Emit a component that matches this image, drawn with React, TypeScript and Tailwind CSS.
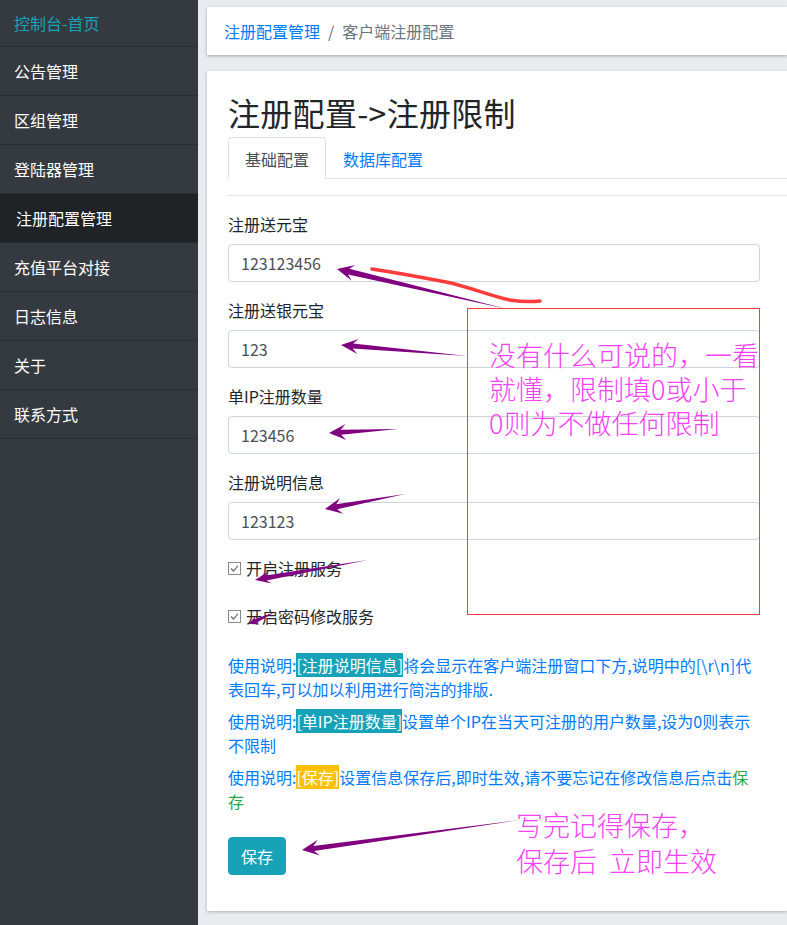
import React from 'react';

const menu = ['公告管理', '区组管理', '登陆器管理', '注册配置管理', '充值平台对接', '日志信息', '关于', '联系方式'];

const fields = [
  { label: '注册送元宝', value: '123123456' },
  { label: '注册送银元宝', value: '123' },
  { label: '单IP注册数量', value: '123456' },
  { label: '注册说明信息', value: '123123' },
];

// annotation arrows: tail -> tip
const arrows = [
  { x1: 507, y1: 309, x2: 337, y2: 269, head: 17, headW: 16, shaft: 6 },
  { x1: 467, y1: 356, x2: 341, y2: 345, head: 17, headW: 15, shaft: 5 },
  { x1: 398, y1: 429, x2: 329, y2: 433, head: 17, headW: 16, shaft: 5 },
  { x1: 405, y1: 494, x2: 325, y2: 509, head: 17, headW: 16, shaft: 5 },
  { x1: 368, y1: 560, x2: 255, y2: 580, head: 16, headW: 13, shaft: 5 },
  { x1: 275, y1: 612, x2: 249, y2: 624, head: 10, headW: 10, shaft: 4 },
  { x1: 520, y1: 820, x2: 302, y2: 850, head: 17, headW: 16, shaft: 5 },
];

function arrowPoints(a: (typeof arrows)[number]) {
  const dx = a.x2 - a.x1;
  const dy = a.y2 - a.y1;
  const len = Math.hypot(dx, dy);
  const ux = dx / len;
  const uy = dy / len;
  const nx = -uy;
  const ny = ux;
  const bx = a.x2 - ux * a.head;
  const by = a.y2 - uy * a.head;
  const jx = a.x2 - ux * a.head * 0.7;
  const jy = a.y2 - uy * a.head * 0.7;
  const pts = [
    [a.x1, a.y1],
    [jx + (nx * a.shaft) / 2, jy + (ny * a.shaft) / 2],
    [bx + (nx * a.headW) / 2, by + (ny * a.headW) / 2],
    [a.x2, a.y2],
    [bx - (nx * a.headW) / 2, by - (ny * a.headW) / 2],
    [jx - (nx * a.shaft) / 2, jy - (ny * a.shaft) / 2],
  ];
  return pts.map((p) => p[0].toFixed(1) + ',' + p[1].toFixed(1)).join(' ');
}

function CheckBox() {
  return (
    <svg width="13" height="13" viewBox="0 0 13 13" className="shrink-0">
      <rect x="0.5" y="0.5" width="12" height="12" fill="#fff" stroke="#8a8a8a" />
      <polyline points="3,6.5 5.5,9 10,3.8" fill="none" stroke="#707070" strokeWidth="1.2" />
    </svg>
  );
}

export default function App() {
  return (
    <div className="relative flex min-h-[925px] w-full overflow-hidden bg-[#e9ecef] font-['Noto_Sans_CJK_SC',sans-serif] text-[16px]">
      {/* sidebar */}
      <aside className="w-[198px] shrink-0 bg-[#343a40] text-white">
        <div className="flex h-[47px] items-center border-b border-[#2a2f34] pl-[14px] text-[#17a2b8]">控制台-首页</div>
        {menu.map((m) => (
          <div
            key={m}
            className={
              m === '注册配置管理'
                ? 'flex h-[49px] items-center border-b border-[#2a2f34] bg-[#1f2326] pl-[16px]'
                : 'flex h-[49px] items-center border-b border-[#2a2f34] pl-[14px]'
            }
          >
            {m}
          </div>
        ))}
      </aside>

      {/* main */}
      <main className="min-w-0 flex-1 pl-[9px] pt-[7px]">
        <div className="flex h-[48px] items-center bg-white px-[17px] shadow-[0_1px_3px_rgba(0,0,0,0.3)]">
          <span className="text-[#007bff]">注册配置管理</span>
          <span className="px-2 text-[#6c757d]">/</span>
          <span className="text-[#6c757d]">客户端注册配置</span>
        </div>

        <div className="mt-4 bg-white pb-[36px] pl-[21px] pt-[22px] shadow-[0_1px_3px_rgba(0,0,0,0.25)]">
          <h2 className="mb-[6px] text-[32px] leading-[38px] tracking-[0.3px] text-[#212529]">注册配置-&gt;注册限制</h2>

          <div className="flex border-b border-[#dee2e6]">
            <div className="-mb-px rounded-t border border-[#dee2e6] border-b-white bg-white px-4 pb-[7px] pt-[9px] leading-[24px] text-[#495057]">
              基础配置
            </div>
            <div className="-mb-px border border-transparent px-4 pb-[7px] pt-[9px] leading-[24px] text-[#007bff]">数据库配置</div>
          </div>

          <div className="mt-4 border-t border-[#e5e5e5]" />

          <div className="mt-4 w-[532px]">
            {fields.map((f) => (
              <div key={f.label} className="mb-4">
                <div className="mb-2 leading-[24px] text-[#212529]">{f.label}</div>
                <div className="flex h-[38px] items-center rounded border border-[#ced4da] px-3 text-[#495057]">{f.value}</div>
              </div>
            ))}

            <div className="mb-6 flex items-center gap-[5px] leading-[24px] text-[#212529]">
              <CheckBox />
              <span>开启注册服务</span>
            </div>
            <div className="mb-[25px] flex items-center gap-[5px] leading-[24px] text-[#212529]">
              <CheckBox />
              <span>开启密码修改服务</span>
            </div>

            <p className="mb-2 leading-[24px] text-[#007bff]">
              使用说明:<span className="bg-[#17a2b8] text-white">[注册说明信息]</span>将会显示在客户端注册窗口下方,说明中的[\r\n]代
              <br />
              表回车,可以加以利用进行简洁的排版.
            </p>
            <p className="mb-2 leading-[24px] text-[#007bff]">
              使用说明:<span className="bg-[#17a2b8] text-white">[单IP注册数量]</span>设置单个IP在当天可注册的用户数量,设为0则表示
              <br />
              不限制
            </p>
            <p className="mb-2 leading-[24px] text-[#007bff]">
              使用说明:<span className="bg-[#ffc107] text-white">[保存]</span>设置信息保存后,即时生效,请不要忘记在修改信息后点击
              <span className="text-[#28a745]">
                保<br />存
              </span>
            </p>

            <button className="mt-4 h-[38px] rounded border border-[#17a2b8] bg-[#17a2b8] px-3 leading-[24px] text-white">保存</button>
          </div>
        </div>
      </main>

      {/* annotations drawn over the screenshot */}
      <div className="absolute left-[467px] top-[308px] h-[307px] w-[293px] border border-[#ff3b3b]" />
      <div className="absolute left-[489px] top-[338px] whitespace-nowrap text-[27px] font-light leading-[34px] text-[#f63ff6]">
        没有什么可说的，一看
        <br />
        就懂，限制填0或小于
        <br />
        0则为不做任何限制
      </div>
      <div className="absolute left-[516px] top-[807px] whitespace-pre text-[27px] font-light leading-[36px] text-[#f63ff6]">
        {'写完记得保存，\n保存后  立即生效'}
      </div>
      <svg className="pointer-events-none absolute left-0 top-0" width="787" height="925" viewBox="0 0 787 925">
        <path
          d="M372,269 C398,273 425,278 446,282 C470,287 490,296 510,300 C522,302 531,302 540,301"
          fill="none"
          stroke="#ff3b3b"
          strokeWidth="3.5"
          strokeLinecap="round"
        />
        {arrows.map((a, i) => (
          <polygon key={i} points={arrowPoints(a)} fill="#800080" />
        ))}
      </svg>
    </div>
  );
}
